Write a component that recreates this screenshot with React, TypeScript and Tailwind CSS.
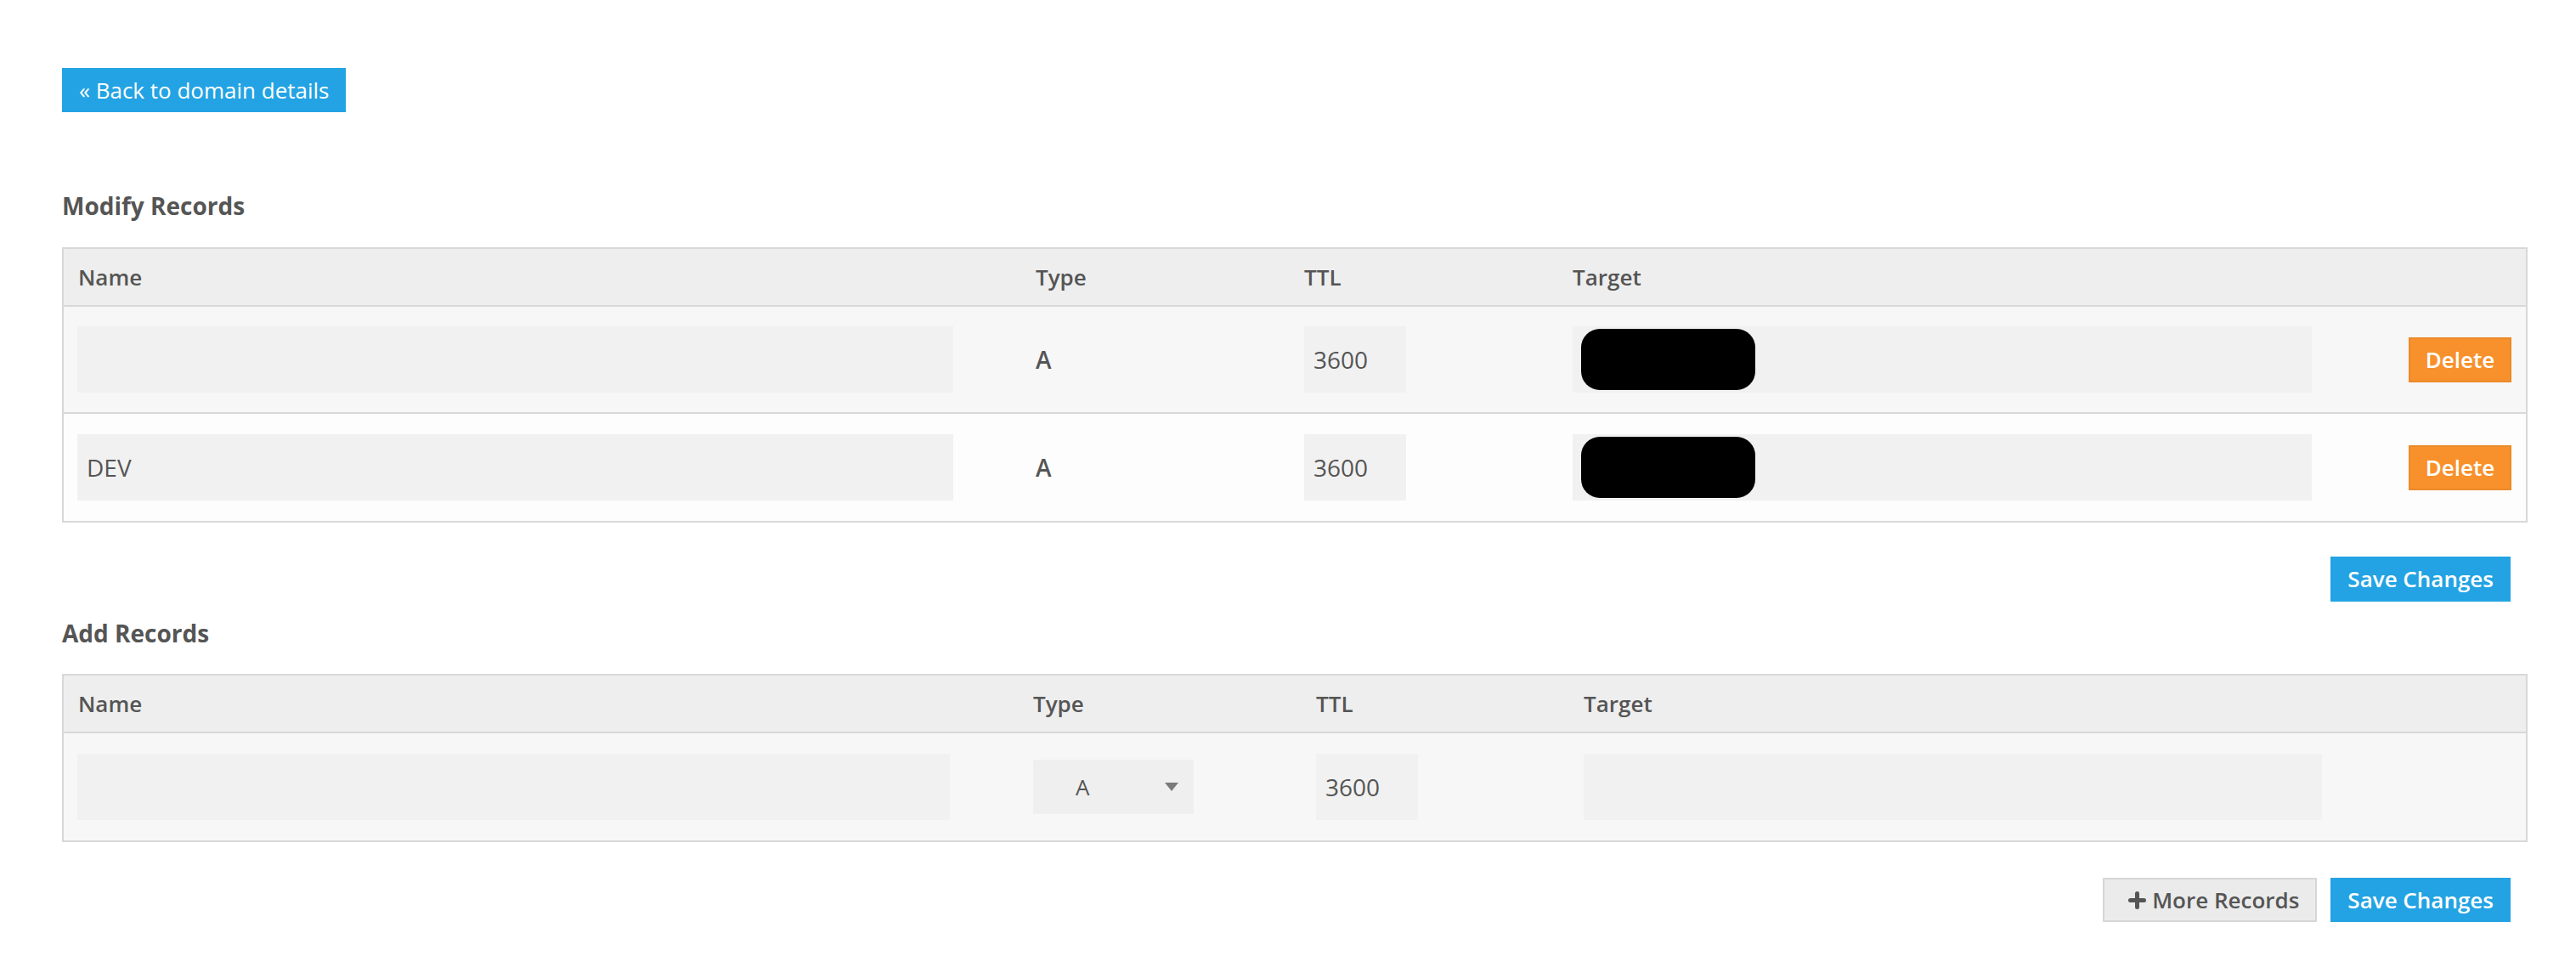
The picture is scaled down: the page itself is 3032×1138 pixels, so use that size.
import React from "react";

const BLUE = "bg-[#23a3e3]";

type ModRecord = { name: string; type: string; ttl: string };

const modifyRecords: ModRecord[] = [
  { name: "", type: "A", ttl: "3600" },
  { name: "DEV", type: "A", ttl: "3600" },
];

function TextInput({ value, className }: { value: string; className: string }) {
  return (
    <input
      type="text"
      defaultValue={value}
      readOnly
      className={`h-[78px] bg-[#f1f1f1] px-[11px] text-[28px] text-[#555] outline-none ${className}`}
    />
  );
}

// Redacted target value (black rounded block over the input)
function RedactedInput() {
  return (
    <div className="flex h-[78px] w-[870px] items-center bg-[#f1f1f1] pl-[10px]">
      <div className="h-[72px] w-[205px] rounded-[22px] bg-black" />
    </div>
  );
}

function PlusIcon() {
  return (
    <svg width="21" height="21" viewBox="0 0 21 21" className="shrink-0">
      <path d="M10.5 2.5v16M2.5 10.5h16" stroke="#555" strokeWidth="5" strokeLinecap="round" />
    </svg>
  );
}

export default function App() {
  return (
    <div
      className="min-h-screen bg-white pl-[73px] pr-[57px] pt-[80px] pb-[40px] text-[#555]"
      style={{ fontFamily: '"Open Sans", "Liberation Sans", sans-serif' }}
    >
      {/* Back link */}
      <button className={`${BLUE} h-[52px] px-[20px] text-[26px] leading-[52px] text-white`}>
        « Back to domain details
      </button>

      {/* Modify Records */}
      <h2 className="mt-[92px] text-[28px] font-bold leading-[36px]">Modify Records</h2>

      <div className="mt-[31px] border-2 border-[#d8d8d8]">
        <div className="grid h-[68px] grid-cols-[1128px_316px_316px_1fr] items-center border-b-2 border-[#d8d8d8] bg-[#eeeeee] text-[26px] font-semibold">
          <div className="pl-[17px]">Name</div>
          <div className="pl-[16px]">Type</div>
          <div className="pl-[16px]">TTL</div>
          <div className="pl-[16px]">Target</div>
        </div>
        {modifyRecords.map((rec, i) => (
          <div
            key={i}
            className={`grid h-[126px] grid-cols-[1128px_316px_316px_1fr_auto] items-center ${
              i === 0 ? "border-b-2 border-[#d8d8d8] bg-[#f7f7f7]" : "bg-[#fdfdfd]"
            }`}
          >
            <div className="pl-[16px]">
              <TextInput value={rec.name} className="w-[1031px]" />
            </div>
            <div className="pl-[16px] text-[28px] font-semibold">{rec.type}</div>
            <div className="pl-[16px]">
              <TextInput value={rec.ttl} className="w-[120px]" />
            </div>
            <div className="pl-[16px]">
              <RedactedInput />
            </div>
            <div className="pr-[17px]">
              <button className="h-[53px] w-[121px] border-2 border-[#ea8a2a] bg-[#f8912c] text-[26px] font-semibold text-white">
                Delete
              </button>
            </div>
          </div>
        ))}
      </div>

      <div className="mt-[40px] flex justify-end pr-[20px]">
        <button className={`${BLUE} h-[53px] px-[20px] text-[26px] font-semibold text-white`}>
          Save Changes
        </button>
      </div>

      {/* Add Records */}
      <h2 className="mt-[19px] text-[28px] font-bold leading-[36px]">Add Records</h2>

      <div className="mt-[30px] border-2 border-[#d8d8d8]">
        <div className="grid h-[68px] grid-cols-[1125px_333px_315px_1fr] items-center border-b-2 border-[#d8d8d8] bg-[#eeeeee] text-[26px] font-semibold">
          <div className="pl-[17px]">Name</div>
          <div className="pl-[16px]">Type</div>
          <div className="pl-[16px]">TTL</div>
          <div className="pl-[16px]">Target</div>
        </div>
        <div className="grid h-[126px] grid-cols-[1125px_333px_315px_1fr] items-center bg-[#f7f7f7]">
          <div className="pl-[16px]">
            <TextInput value="" className="w-[1027px]" />
          </div>
          <div className="pl-[16px]">
            <div className="flex h-[64px] w-[189px] items-center justify-between bg-[#efefef] pl-[50px] pr-[18px] text-[26px]">
              <span>A</span>
              <svg width="16" height="10" viewBox="0 0 16 10">
                <path d="M0 0h16L8 10z" fill="#7a7a7a" />
              </svg>
            </div>
          </div>
          <div className="pl-[16px]">
            <TextInput value="3600" className="w-[120px]" />
          </div>
          <div className="pl-[16px]">
            <TextInput value="" className="w-[869px]" />
          </div>
        </div>
      </div>

      <div className="mt-[42px] flex justify-end gap-[16px] pr-[20px]">
        <button className="flex h-[52px] items-center gap-[7px] border-2 border-[#d6d6d6] bg-[#ebebeb] pl-[28px] pr-[19px] text-[26px] font-semibold text-[#555]">
          <PlusIcon />
          More Records
        </button>
        <button className={`${BLUE} h-[52px] px-[20px] text-[26px] font-semibold text-white`}>
          Save Changes
        </button>
      </div>
    </div>
  );
}
